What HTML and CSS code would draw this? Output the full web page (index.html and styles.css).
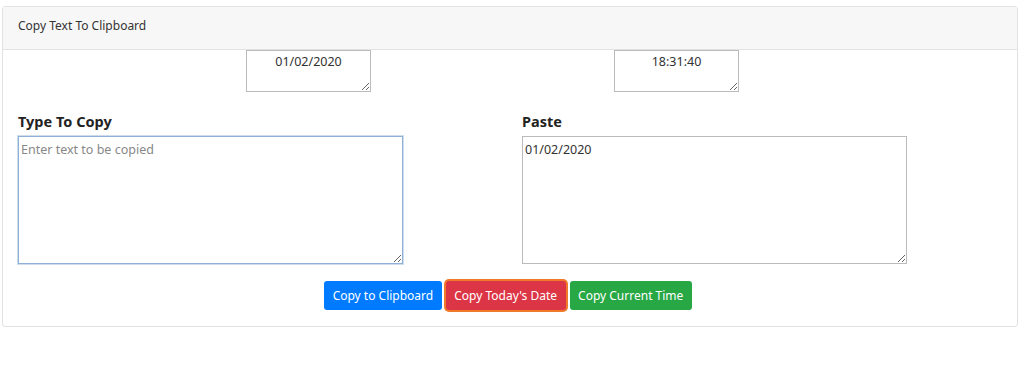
FILE: index.html
```html
<!DOCTYPE html>
<html lang="en">
<head>
    <meta charset="UTF-8" />
    <meta name="viewport" content="width=device-width, initial-scale=1.0">
    <title>Copy Text To Clipboard</title>
    <link rel="stylesheet" href="styles.css">
</head>
<body>
    <div class="card">
        <div class="card-header">Copy Text To Clipboard</div>

        <div class="card-body">
            <div class="stamp-row">
                <textarea id="dateBox" class="stamp">01/02/2020</textarea>
                <textarea id="timeBox" class="stamp">18:31:40</textarea>
            </div>

            <div class="columns">
                <div class="field">
                    <label for="copyText">Type To Copy</label>
                    <textarea id="copyText" class="big focused" placeholder="Enter text to be copied"></textarea>
                </div>
                <div class="field">
                    <label for="pasteText">Paste</label>
                    <textarea id="pasteText" class="big">01/02/2020</textarea>
                </div>
            </div>

            <div class="actions">
                <button class="btn btn-blue">Copy to Clipboard</button>
                <button class="btn btn-red active">Copy Today's Date</button>
                <button class="btn btn-green">Copy Current Time</button>
            </div>
        </div>
    </div>
</body>
</html>
```

FILE: styles.css
```css
body {
    margin: 0;
    padding: 6px 6px 0 2px;
    font-family: "Noto Sans", "Open Sans", Arial, sans-serif;
    color: #212529;
    background-color: white;
}

.card {
    border: 1px solid #e2e2e2;
    border-radius: 3px;
    height: 321px;
    box-sizing: border-box;
}

.card-header {
    background-color: #f7f7f7;
    border-bottom: 1px solid #e2e2e2;
    height: 42px;
    padding: 0 15px;
    font-size: 12px;
    line-height: 37px;
    color: #333;
}

.card-body {
    padding: 0 15px;
}

.stamp-row {
    display: flex;
    gap: 243px;
    padding-left: 228px;
}

textarea {
    font-family: "Noto Sans", "Open Sans", Arial, sans-serif;
    font-size: 12.5px;
    color: #333;
    border: 1px solid #bbb;
    margin: 0;
    box-sizing: border-box;
}

.stamp {
    width: 125px;
    height: 42px;
    text-align: center;
    padding: 2px 4px;
}

.columns {
    display: flex;
    gap: 119px;
    margin-top: 19px;
}

.field {
    display: flex;
    flex-direction: column;
}

label {
    font-weight: bold;
    font-size: 14.5px;
    color: #222;
    margin-bottom: 5px;
    line-height: 20px;
}

.big {
    width: 385px;
    height: 128px;
    padding: 4px 2px;
}

.big::placeholder {
    color: #888;
}

.focused {
    border-color: #8fb0d6;
    outline: none;
    box-shadow: 0 0 0 1px #cfdcec;
}

.actions {
    display: flex;
    justify-content: center;
    gap: 4px;
    margin-top: 17px;
    padding-right: 4px;
}

.btn {
    font-family: "Noto Sans", "Open Sans", Arial, sans-serif;
    font-size: 12px;
    color: white;
    border: none;
    border-radius: 3px;
    height: 29px;
    padding: 0 8.5px;
    cursor: pointer;
}

.btn-blue {
    background-color: #007bff;
}

.btn-red {
    background-color: #dc3545;
}

.btn-green {
    background-color: #28a745;
}

.active {
    box-shadow: 0 0 0 2px #f07a2a;
}
```
